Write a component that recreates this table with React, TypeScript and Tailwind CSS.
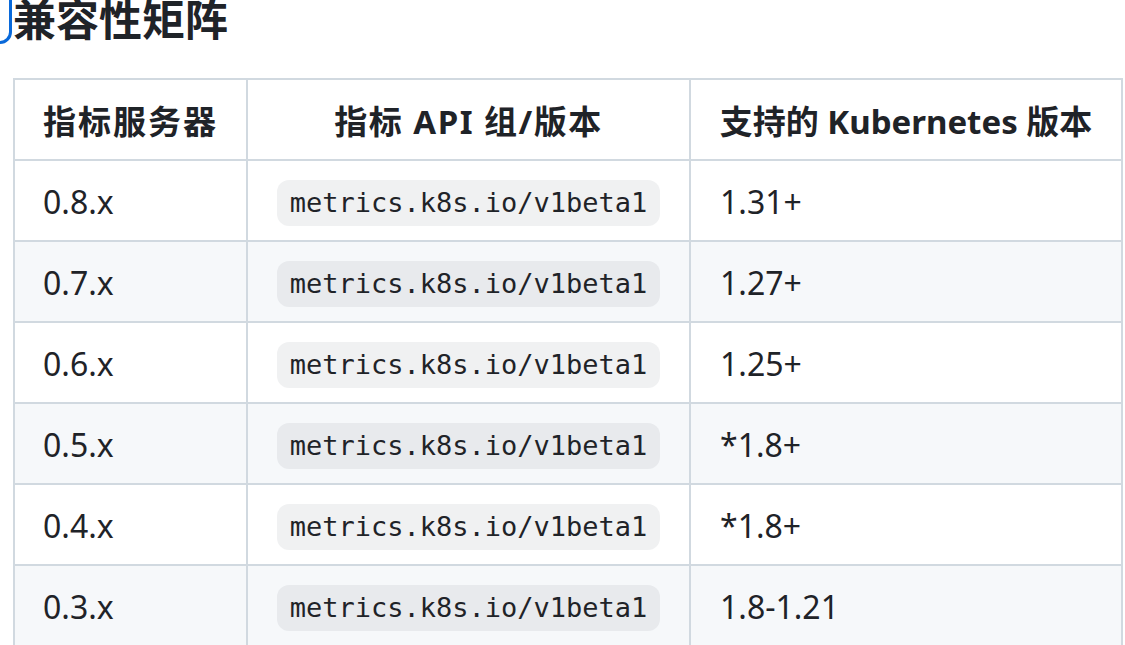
import React from "react";

const rows = [
  { v: "0.8.x", k: "1.31+" },
  { v: "0.7.x", k: "1.27+" },
  { v: "0.6.x", k: "1.25+" },
  { v: "0.5.x", k: "*1.8+" },
  { v: "0.4.x", k: "*1.8+" },
  { v: "0.3.x", k: "1.8-1.21" },
];

const sans = "font-['Segoe_UI','Noto_Sans','Noto_Sans_CJK_SC',sans-serif]";

const headers = [
  { t: "指标服务器", c: "tracking-[2px]" },
  { t: "指标 API 组/版本", c: "tracking-[1.5px]" },
  { t: "支持的 Kubernetes 版本", c: "tracking-[0px]" },
];

export default function App() {
  return (
    <div className={`relative h-[645px] w-[1125px] overflow-hidden bg-white text-[#1f2328] ${sans}`}>
      <div className="absolute left-[-40px] top-[-12px] h-[56px] w-[52px] rounded-[12px] border-[3px] border-[#0969da]" />
      <h2 className="mt-[-4px] pl-[13px] text-[43px] font-bold leading-none font-['Noto_Sans_CJK_SC',sans-serif]">
        兼容性矩阵
      </h2>
      <div className="ml-[13px] mt-[39px] grid w-[1110px] grid-cols-[231px_441px_430px] auto-rows-[79px] gap-[2px] bg-[#d1d9e0] p-[2px] text-[32px]">
        {headers.map((h) => (
          <div key={h.t} className={`flex items-center justify-center bg-white pt-[4px] text-[33px] font-bold ${h.c}`}>
            {h.t}
          </div>
        ))}
        {rows.map((r, i) => {
          const bg = i % 2 === 1 ? "bg-[#f6f8fa]" : "bg-white";
          return (
            <React.Fragment key={i}>
              <div className={`flex items-center pl-[28px] pt-[3px] ${bg}`}>{r.v}</div>
              <div className={`flex items-center pl-[29px] pt-[5px] ${bg}`}>
                <span className="flex h-[46px] w-[383px] items-center justify-center rounded-[12px] bg-[#818b981f] font-['DejaVu_Sans_Mono',monospace] text-[27px]">
                  metrics.k8s.io/v1beta1
                </span>
              </div>
              <div className={`flex items-center pl-[29px] pt-[3px] ${bg}`}>{r.k}</div>
            </React.Fragment>
          );
        })}
      </div>
    </div>
  );
}
